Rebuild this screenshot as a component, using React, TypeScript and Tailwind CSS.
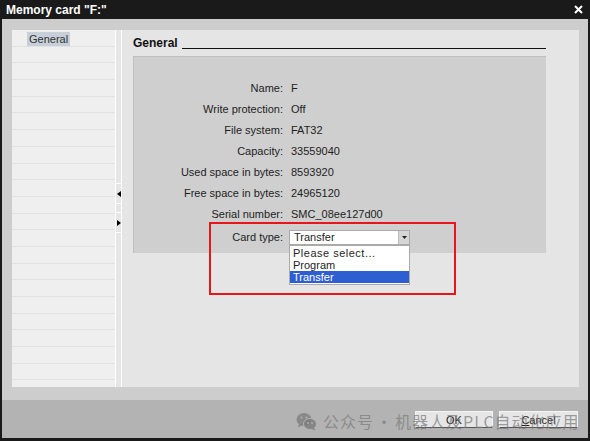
import React from 'react'

const ROWS: [string, string][] = [
  ['Name:', 'F'],
  ['Write protection:', 'Off'],
  ['File system:', 'FAT32'],
  ['Capacity:', '33559040'],
  ['Used space in bytes:', '8593920'],
  ['Free space in bytes:', '24965120'],
  ['Serial number:', 'SMC_08ee127d00'],
]

const FONT = { fontFamily: '"Liberation Sans", Arial, sans-serif' }

export default function App() {
  return (
    <div className="relative w-[590px] h-[441px] bg-[#1a1a1a] flex flex-col px-[2px] pb-[3px] text-[#1e1e1e]" style={FONT}>
      {/* title bar */}
      <div className="h-[19px] flex items-center justify-between pl-[4px] pr-[5px] text-white">
        <span className="text-[12px] font-bold">Memory card "F:"</span>
        <svg width="9" height="9" viewBox="0 0 9 9">
          <path d="M1 1 L8 8 M8 1 L1 8" stroke="#fff" strokeWidth="2" />
        </svg>
      </div>

      <div className="flex-1 bg-[#cdcdcd] flex flex-col">
        <div className="flex-1 flex pt-[11px] pl-[10px] pr-[9px] pb-[13px]">
          {/* left tree panel */}
          <div className="w-[103px] bg-[#efefef] flex flex-col overflow-hidden">
            {Array.from({ length: 21 }).map((_, i) => (
              <div key={i} className="h-[16.7px] shrink-0 border-b border-[#e2e2e2] pl-[15px] pt-[2px]">
                {i === 0 && (
                  <div className="w-fit px-[2px] h-[14px] leading-[14px] bg-[#c7d0d9] text-[11px] text-[#333]">General</div>
                )}
              </div>
            ))}
          </div>

          {/* splitter */}
          <div className="w-[7px] bg-[#e6e6e6] border-x border-white flex flex-col">
            <div className="h-[153px]" />
            <div className="h-[21px] border-y border-white flex items-center justify-center">
              <svg width="4" height="6" viewBox="0 0 4 6"><path d="M4 0 L0 3 L4 6Z" fill="#000" /></svg>
            </div>
            <div className="h-[8px]" />
            <div className="h-[21px] border-y border-white flex items-center justify-center">
              <svg width="4" height="6" viewBox="0 0 4 6"><path d="M0 0 L4 3 L0 6Z" fill="#000" /></svg>
            </div>
          </div>

          {/* content */}
          <div className="flex-1 bg-[#e5e5e5] pl-[11px] pr-[33px] pt-[7px]">
            <div className="flex items-end h-[13px] mb-[6px]">
              <span className="text-[12px] font-bold leading-[13px] text-[#111]">General</span>
              <div className="flex-1 ml-[4px] border-b border-[#111] mb-[1px]" />
            </div>

            <div className="bg-[#cfcfcf] border-l border-t border-[#c0c0c0] pt-[21px] pb-[8px] text-[11px]">
              {ROWS.map(([label, value]) => (
                <div key={label} className="flex h-[21px] items-center">
                  <span className="w-[149px] text-right">{label}</span>
                  <span className="ml-[8px]">{value}</span>
                </div>
              ))}
              <div className="flex h-[15px] items-center mt-[5px]">
                <span className="w-[149px] text-right">Card type:</span>
                <div className="relative ml-[6px] w-[121px] h-[15px] bg-white border border-[#aaa] flex items-center">
                  <span className="pl-[4px] flex-1">Transfer</span>
                  <div className="w-[11px] h-[13px] bg-[#d6d6d6] border-l border-[#bbb] flex items-center justify-center">
                    <svg width="5" height="3" viewBox="0 0 5 3"><path d="M0 0 L5 0 L2.5 3Z" fill="#222" /></svg>
                  </div>
                  <div className="absolute left-[-1px] top-[14px] w-[121px] h-[40px] bg-white border border-[#aaa] pt-[1px] z-10">
                    <div className="h-[12px] leading-[12px] pl-[3px] tracking-[0.5px]">Please select...</div>
                    <div className="h-[12px] leading-[12px] pl-[3px]">Program</div>
                    <div className="h-[12px] leading-[12px] pl-[3px] bg-[#2e5fd2] text-white">Transfer</div>
                  </div>
                </div>
              </div>
            </div>
          </div>
        </div>

        {/* bottom bar */}
        <div className="h-[38px] bg-[#b3b3b3] flex justify-end gap-[6px] pr-[10px] pt-[11px]">
          <button className="w-[78px] h-[17px] bg-[#e6e6e6] border border-[#f4f4f4] border-b-[#555] text-[11px] leading-[14px]">OK</button>
          <button className="w-[79px] h-[17px] bg-[#e6e6e6] border border-[#f4f4f4] border-b-[#555] text-[11px] leading-[14px]">
            <span className="underline">C</span>ancel
          </button>
        </div>
      </div>

      {/* red annotation box */}
      <div className="absolute left-[209px] top-[222px] w-[247px] h-[73px] border-2 border-[#e8161b] pointer-events-none" />

      {/* watermark */}
      <div className="absolute left-[296px] top-[411px] flex items-center gap-[6px] pointer-events-none text-[rgba(120,120,120,0.7)]">
        <svg width="21" height="19" viewBox="0 0 21 19">
          <ellipse cx="8" cy="7.5" rx="7.5" ry="6.5" fill="rgba(120,120,120,0.7)" />
          <path d="M3 12 L2 15.5 L6.5 13Z" fill="rgba(120,120,120,0.7)" />
          <ellipse cx="14" cy="12" rx="6.5" ry="5.5" fill="rgba(125,125,125,0.85)" stroke="#b3b3b3" strokeWidth="1" />
          <path d="M18 16 L19.5 18.5 L15.5 17Z" fill="rgba(125,125,125,0.85)" />
          <circle cx="5.5" cy="5.5" r="1" fill="#b3b3b3" />
          <circle cx="10.5" cy="5.5" r="1" fill="#b3b3b3" />
          <circle cx="12" cy="11" r="0.9" fill="#b3b3b3" />
          <circle cx="16" cy="11" r="0.9" fill="#b3b3b3" />
        </svg>
        <span className="text-[16px] leading-[20px] tracking-[1px] flex" style={{ fontFamily: '"Noto Sans CJK SC", "Noto Sans", sans-serif' }}>
          <span>公众号</span>
          <span className="mx-[2px]">·</span>
          <span>机器人及PLC自动化应用</span>
        </span>
      </div>
    </div>
  )
}
